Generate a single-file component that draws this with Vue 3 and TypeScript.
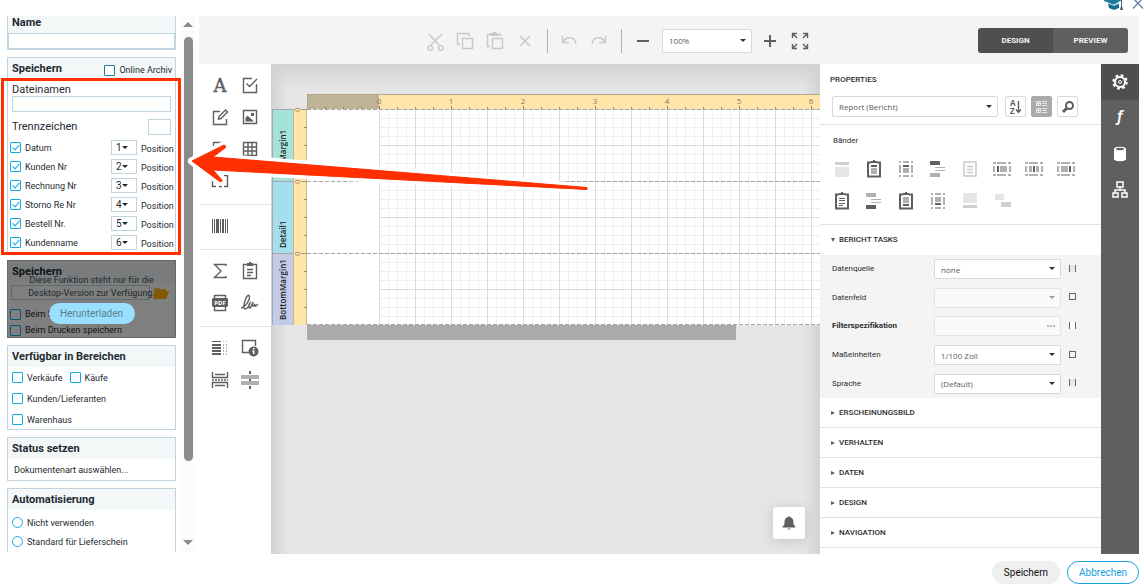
<script setup lang="ts">
import { reactive, ref } from 'vue'

interface Shape {
  d: string
  c: string
}

const icons: Record<string, Shape[]> = {
  check: [{ d: 'M12 3.5H3.5V17.500H16.500V9M6.500 8.500L9.500 11.500L17 4', c: 's' }],
  edit: [{ d: 'M10 4.500H3.500V17.500H16.500V12M9 9.500L15.500 3L17.500 5L11 11.500L8.500 12Z', c: 's' }],
  picture: [
    { d: 'M3.500 3.500H16.500V16.500H3.500Z', c: 's' },
    { d: 'M5.500 14.500V11L7.500 8.500L10 11L11.500 12L14 14.500ZM11 6H14V9H11Z', c: 'f' },
  ],
  rich: [{ d: 'M3.500 7V3.500H15M17 9V12M3.500 12V16.500H7M11 11L14 14', c: 's' }],
  table: [{ d: 'M3.500 3.500H16.500V16.500H3.500ZM3 8H17M3 12H17M8 3V17M12 3V17', c: 's' }],
  subreport: [{ d: 'M6 4.500H2.500V15.500H6M14 4.500H17.500V15.500H14M8 4.500H12M9 15.500H12', c: 's' }],
  barcode: [{ d: 'M2 3H3V17H2ZM4 3H5V17H4ZM6 3H9V17H6ZM10 3H11V17H10ZM12 3H14V17H12ZM15 3H16V17H15ZM17 3H18V17H17Z', c: 'f' }],
  sigma: [{ d: 'M16 5V3.500H4.500L11 10L4.500 16.500H16V15', c: 's' }],
  clipboard: [
    { d: 'M7 3.500H3.500V17.500H16.500V3.500H13M7 8.500H13M7 11.500H13M7 14.500H11', c: 's' },
    { d: 'M7 2H9V1H11V2H13V5H7Z', c: 'f' },
  ],
  pdf: [
    { d: 'M4.500 5V2.500H15.500V5M4.500 14V17.500H15.500V14', c: 's' },
    { d: 'M3 5H17L18 6V13L17 14H3L2 13V6Z', c: 'f' },
  ],
  sign: [{ d: 'M1 15C6 14 11 5 9 2.500C7 1 3 11 4 15C5 18 10 13 10 10C8 13 9 17 11 14L13 9C12 14 13 14 15 11C14 15 16 13 18 11', c: 's' }],
  toc: [
    { d: 'M2 3H11V4H2ZM2 6H11V8H2ZM2 9H11V11H2ZM2 12H11V14H2ZM2 15H11V17H2Z', c: 'f' },
    { d: 'M13 3H14V4H13ZM16 3H17V4H16ZM13 6H14V8H13ZM16 6H17V8H16ZM13 9H14V11H13ZM16 9H17V11H16ZM13 12H14V14H13ZM16 12H17V14H16ZM13 15H14V17H13ZM16 15H17V17H16Z', c: 'm' },
  ],
  info: [
    { d: 'M9 14.500H2.500V2.500H15.500V8', c: 's' },
    { d: 'M13.500 8.500A5 5 0 1 0 13.600 8.500ZM13 10H14.500V11.500H13ZM12 12.500H14.500V16H13V13.500H12Z', c: 'f' },
  ],
  pagebreak: [{ d: 'M2.500 2V7.500H17.500V2M5 4.500H15M2.500 18V12.500H17.500V18M5 15.500H15M2 10H4M5 10H7M8 10H10M11 10H13M14 10H16M17 10H18', c: 's' }],
  crossband: [
    { d: 'M1 5H19V9H1ZM1 11H19V15H1Z', c: 'm' },
    { d: 'M9 1H11V4H9ZM9 16H11V19H9ZM9 9H11V11H9Z', c: 'f' },
  ],
  cut: [{ d: 'M4 3L14 14M17 3L6 14M7 15.500A2.300 2.300 0 1 1 6.900 15.400M17.500 15.500A2.300 2.300 0 1 1 17.400 15.400', c: 'd' }],
  copy: [{ d: 'M5 13.500H2.500V2.500H14V5M7.500 7.500H17.500V17.500H7.500Z', c: 'd' }],
  paste: [
    { d: 'M5 15.500H2.500V3.500H5M13 3.500H15.500V5M7.500 7.500H17.500V17.500H7.500Z', c: 'd' },
    { d: 'M5 2H8V1H11V2H13V5H5Z', c: 'df' },
  ],
  remove: [{ d: 'M5 5L15 15M15 5L5 15', c: 'd' }],
  undo: [{ d: 'M3.500 5V11.500H10M4 11C7 5 16 5 17 13', c: 'd' }],
  redo: [{ d: 'M16.500 5V11.500H10M16 11C13 5 4 5 3 13', c: 'd' }],
  minus: [{ d: 'M4 9H16V11H4Z', c: 'f' }],
  plus: [{ d: 'M4 9H9V4H11V9H16V11H11V16H9V11H4Z', c: 'f' }],
  full: [{ d: 'M2.500 7V2.500H7M3 3L7 7M13 2.500H17.500V7M17 3L13 7M2.500 13V17.500H7M3 17L7 13M13 17.500H17.500V13M17 17L13 13', c: 's' }],
  bandTop: [
    { d: 'M3 3H17V6H3Z', c: 'm2' },
    { d: 'M3 8H17V18H3Z', c: 'l' },
  ],
  bandHead: [
    { d: 'M7 3.500H4V17.500H16V3.500H13', c: 's2' },
    { d: 'M8 2H9V1H11V2H13V4H7V2ZM7 6H13V8H7Z', c: 'f' },
    { d: 'M7 9H13V15H7Z', c: 'm' },
  ],
  bandGroup: [
    { d: 'M3 2H5V4H3ZM7 2H13V4H7ZM15 2H17V4H15ZM3 6H5V14H3ZM15 6H17V14H15ZM7 9H13V14H7ZM3 16H5V18H3ZM7 16H13V18H7ZM15 16H17V18H15Z', c: 'm' },
    { d: 'M7 6H13V8H7Z', c: 'f' },
  ],
  bandStep: [
    { d: 'M2 2H12V6H2Z', c: 'f' },
    { d: 'M7 8H17V9H7ZM7 11H17V12H7ZM2 14H12V18H2Z', c: 'm' },
  ],
  bandPage: [
    { d: 'M4 3H16V17H4ZM7 7.500H13M7 10.500H13M7 13.500H13', c: 'd' },
  ],
  bandV1: [
    { d: 'M1 3H4V5H1ZM5 3H14V5H5ZM16 3H19V5H16ZM1 7H3V13H1ZM8 7H15V13H8ZM17 7H19V13H17ZM1 15H4V17H1ZM5 15H14V17H5ZM16 15H19V17H16Z', c: 'm' },
    { d: 'M5 7H7V13H5Z', c: 'f' },
  ],
  bandV2: [
    { d: 'M1 3H4V5H1ZM5 3H14V5H5ZM16 3H19V5H16ZM1 7H3V13H1ZM5 7H8V13H5ZM12 7H15V13H12ZM17 7H19V13H17ZM1 15H4V17H1ZM5 15H14V17H5ZM16 15H19V17H16Z', c: 'm' },
    { d: 'M9 7H11V13H9Z', c: 'f' },
  ],
  bandV3: [
    { d: 'M1 3H4V5H1ZM5 3H14V5H5ZM16 3H19V5H16ZM1 7H3V13H1ZM5 7H12V13H5ZM17 7H19V13H17ZM1 15H4V17H1ZM5 15H14V17H5ZM16 15H19V17H16Z', c: 'm' },
    { d: 'M13 7H15V13H13Z', c: 'f' },
  ],
  bandDetail: [
    { d: 'M7 3.500H4V17.500H16V3.500H13', c: 's2' },
    { d: 'M8 2H9V1H11V2H13V4H7V2ZM7 7H13V8H7ZM7 9H13V10H7ZM7 12H13V13H7ZM7 14H11V15H7Z', c: 'f' },
  ],
  bandStep2: [
    { d: 'M2 14H12V18H2Z', c: 'f' },
    { d: 'M2 2H12V6H2ZM7 8H17V9H7ZM7 11H17V12H7Z', c: 'm' },
  ],
  bandFoot: [
    { d: 'M7 3.500H4V17.500H16V3.500H13', c: 's2' },
    { d: 'M8 2H9V1H11V2H13V4H7V2ZM7 13H13V15H7Z', c: 'f' },
    { d: 'M7 6H13V12H7Z', c: 'm' },
  ],
  bandGroup2: [
    { d: 'M3 2H5V4H3ZM7 2H13V4H7ZM15 2H17V4H15ZM3 6H5V14H3ZM15 6H17V14H15ZM7 6H13V11H7ZM3 16H5V18H3ZM7 16H13V18H7ZM15 16H17V18H15Z', c: 'm' },
    { d: 'M7 12H13V14H7Z', c: 'f' },
  ],
  bandBottom: [
    { d: 'M3 2H17V12H3Z', c: 'l' },
    { d: 'M3 14H17V17H3Z', c: 'm2' },
  ],
  bandSub: [
    { d: 'M3 3H12V9H3Z', c: 'l' },
    { d: 'M9 11H19V16H9Z', c: 'm2' },
  ],
}

const editGroup: string[] = ['cut', 'copy', 'paste', 'remove']
const undoGroup: string[] = ['undo', 'redo']
const toolGroups: string[][] = [
  ['text', 'check', 'edit', 'picture', 'rich', 'table', 'subreport'],
  ['barcode'],
  ['sigma', 'clipboard', 'pdf', 'sign'],
  ['toc', 'info', 'pagebreak', 'crossband'],
]
const bandIcons: string[] = [
  'bandTop', 'bandHead', 'bandGroup', 'bandStep', 'bandPage', 'bandV1', 'bandV2', 'bandV3',
  'bandDetail', 'bandStep2', 'bandFoot', 'bandGroup2', 'bandBottom', 'bandSub',
]

const fields = reactive([
  { label: 'Datum', on: true, pos: 1 },
  { label: 'Kunden Nr', on: true, pos: 2 },
  { label: 'Rechnung Nr', on: true, pos: 3 },
  { label: 'Storno Re Nr', on: true, pos: 4 },
  { label: 'Bestell Nr.', on: true, pos: 5 },
  { label: 'Kundenname', on: true, pos: 6 },
])

const bands = [
  { name: 'TopMargin1', cls: 'top' },
  { name: 'Detail1', cls: 'detail' },
  { name: 'BottomMargin1', cls: 'bottom' },
]

const tasks = [
  { label: 'Datenquelle', value: 'none', kind: 'select', off: false, marker: 'sides' },
  { label: 'Datenfeld', value: '', kind: 'select', off: true, marker: 'box' },
  { label: 'Filterspezifikation', value: '', kind: 'text', off: true, marker: 'sides white' },
  { label: 'Maßeinheiten', value: '1/100 Zoll', kind: 'select', off: false, marker: 'box' },
  { label: 'Sprache', value: '(Default)', kind: 'select', off: false, marker: 'sides' },
]

const sections = ['ERSCHEINUNGSBILD', 'VERHALTEN', 'DATEN', 'DESIGN', 'NAVIGATION']
const numbers = [1, 2, 3, 4, 5, 6]
const ticks = Array.from({ length: 60 }, (_, i) => i + 1)
const automation = ref('')
</script>

<template>
  <div class="page">
    <header class="strip">
      <svg class="hat" width="20" height="10" viewBox="0 0 20 10">
        <path d="M0 0H18L11 4L9 4.500L0 1Z" fill="#1c7c9b" />
        <path d="M4 3L10 5L15 3V8L10 10L5 8Z" fill="#14708f" />
        <path d="M4 3L10 5.500L15 3.500" fill="none" stroke="#b9dbe6" />
        <path d="M17 0H18V6L19 10H16L17 6Z" fill="#3b5d74" />
      </svg>
      <button class="close" aria-label="Schließen">
        <svg width="12" height="9" viewBox="0 0 12 9"><path d="M1 -2L11 8.500M11 -2L1 8.500" stroke="#7186ad" stroke-width="1.500" /></svg>
      </button>
    </header>

    <div class="main">
      <aside class="side">
        <section class="card name">
          <h2><label for="name">Name</label></h2>
          <input id="name" type="text" />
        </section>

        <section class="card">
          <div class="head">
            <h2>Speichern</h2>
            <label class="opt archive"><input class="tick dark" type="checkbox" />Online Archiv</label>
          </div>
          <div class="files">
            <label class="cap" for="files">Dateinamen</label>
            <input id="files" class="field" type="text" />
            <div class="sep-row">
              <label class="cap" for="sepchar">Trennzeichen</label>
              <input id="sepchar" class="field tiny" type="text" />
            </div>
          </div>
          <div v-for="f in fields" :key="f.label" class="pos-row">
            <label class="opt"><input v-model="f.on" class="tick" type="checkbox" />{{ f.label }}</label>
            <span class="mini">
              <select v-model="f.pos" :aria-label="f.label + ' Position'">
                <option v-for="n in numbers" :key="n" :value="n">{{ n }}</option>
              </select>
            </span>
            <span class="pos">Position</span>
          </div>
        </section>

        <section class="card locked">
          <div class="head"><h2>Speichern</h2></div>
          <div class="locked-body">
            <div class="path-row">
              <input class="field" type="text" aria-label="Ordner" />
              <svg width="16" height="12" viewBox="0 0 16 12"><path d="M1 2L2 1H6L7 2H13V4H16L13 12H0Z" fill="#f2c230" /><path d="M3 4H16L13 12H0Z" fill="#ffb100" /></svg>
            </div>
            <label class="opt"><input class="tick" type="checkbox" />Beim Speichern</label>
            <label class="opt"><input class="tick" type="checkbox" />Beim Drucken speichern</label>
          </div>
          <div class="veil">
            <p>Diese Funktion steht nur für die Desktop-Version zur Verfügung.</p>
            <button>Herunterladen</button>
          </div>
        </section>

        <section class="card">
          <div class="head"><h2>Verfügbar in Bereichen</h2></div>
          <div class="areas">
            <div class="area-row">
              <label class="opt"><input class="tick" type="checkbox" />Verkäufe</label>
              <label class="opt"><input class="tick" type="checkbox" />Käufe</label>
            </div>
            <div class="area-row"><label class="opt"><input class="tick" type="checkbox" />Kunden/Lieferanten</label></div>
            <div class="area-row"><label class="opt"><input class="tick" type="checkbox" />Warenhaus</label></div>
          </div>
        </section>

        <section class="card">
          <div class="head"><h2>Status setzen</h2></div>
          <button class="status">Dokumentenart auswählen...</button>
        </section>

        <section class="card">
          <div class="head"><h2>Automatisierung</h2></div>
          <div class="auto">
            <label class="opt"><input v-model="automation" type="radio" name="auto" value="none" />Nicht verwenden</label>
            <label class="opt"><input v-model="automation" type="radio" name="auto" value="delivery" />Standard für Lieferschein</label>
          </div>
        </section>
      </aside>

      <div class="scroll">
        <i class="up"></i>
        <i class="thumb"></i>
        <i class="down"></i>
      </div>

      <div class="designer">
        <div class="toolbar">
          <button v-for="n in editGroup" :key="n" class="tool" :aria-label="n">
            <svg class="ico" viewBox="0 0 20 20"><path v-for="(s, i) in icons[n]" :key="i" :d="s.d" :class="s.c" /></svg>
          </button>
          <span class="bar"></span>
          <button v-for="n in undoGroup" :key="n" class="tool" :aria-label="n">
            <svg class="ico" viewBox="0 0 20 20"><path v-for="(s, i) in icons[n]" :key="i" :d="s.d" :class="s.c" /></svg>
          </button>
          <span class="bar"></span>
          <button class="tool" aria-label="minus">
            <svg class="ico" viewBox="0 0 20 20"><path v-for="(s, i) in icons.minus" :key="i" :d="s.d" :class="s.c" /></svg>
          </button>
          <span class="drop zoom"><select aria-label="Zoom"><option>100%</option></select></span>
          <button class="tool" aria-label="plus">
            <svg class="ico" viewBox="0 0 20 20"><path v-for="(s, i) in icons.plus" :key="i" :d="s.d" :class="s.c" /></svg>
          </button>
          <button class="tool" aria-label="full">
            <svg class="ico" viewBox="0 0 20 20"><path v-for="(s, i) in icons.full" :key="i" :d="s.d" :class="s.c" /></svg>
          </button>
          <div class="modes">
            <button class="on">DESIGN</button>
            <button>PREVIEW</button>
          </div>
        </div>

        <div class="work">
          <nav class="toolbox">
            <div v-for="(g, gi) in toolGroups" :key="gi" class="group">
              <button v-for="n in g" :key="n" class="cell" :aria-label="n">
                <svg class="ico" viewBox="0 0 20 20">
                  <text v-if="n === 'text'" class="glyph-a" x="10" y="17" text-anchor="middle">A</text>
                  <path v-for="(s, i) in icons[n]" :key="i" :d="s.d" :class="s.c" />
                  <text v-if="n === 'pdf'" class="glyph-pdf" x="10" y="12" text-anchor="middle">PDF</text>
                </svg>
              </button>
            </div>
          </nav>

          <div class="canvas">
            <svg class="ruler" width="100%" height="16">
              <rect x="0" y="0" width="72" height="16" fill="#beb394" />
              <rect x="72" y="0" width="100%" height="16" fill="#ffe5a8" />
              <path d="M0 .5H2000M0 15.500H2000M.5 0V16" stroke="#b3a78c" />
              <path v-for="t in ticks" :key="t" :d="'M' + (t * 18 + 0.5) + (t % 4 === 0 ? ' 12' : ' 13') + 'V16'" stroke="#8f8779" />
              <text x="72" y="10" text-anchor="middle">0</text>
              <text v-for="n in numbers" :key="n" :x="72 + n * 72" y="10" text-anchor="middle">{{ n }}</text>
            </svg>
            <div class="labels">
              <div v-for="b in bands" :key="b.name" class="band" :class="b.cls"><span>{{ b.name }}</span></div>
            </div>
            <svg class="vruler" width="14" height="216">
              <rect width="14" height="216" fill="#ffe5a8" />
              <path d="M.5 0V216M13.500 0V216" stroke="#c9b88f" />
              <path v-for="k in 12" :key="k" :d="'M11 ' + ((k - 1) * 18 + 0.5) + 'H14'" stroke="#8f8779" />
              <path v-for="k in 3" :key="'z' + k" :d="'M8 ' + ((k - 1) * 72 + 0.5) + 'H14'" stroke="#a39a82" />
              <text v-for="k in 3" :key="'t' + k" :transform="'translate(7 ' + ((k - 1) * 72 + 3) + ') rotate(-90)'">0</text>
            </svg>
            <svg class="surface" width="100%" height="216">
              <defs>
                <pattern id="grid" width="36" height="36" patternUnits="userSpaceOnUse">
                  <path d="M9.500 0V36M18.500 0V36M27.500 0V36M0 9.500H36M0 18.500H36M0 27.500H36" stroke="#f0f0f0" />
                  <path d="M.5 0V36M0 .5H36" stroke="#dcdcdc" />
                </pattern>
              </defs>
              <rect width="100%" height="216" fill="#fff" />
              <rect x="72" width="100%" height="216" fill="url(#grid)" />
              <path d="M0 .5H2000M0 72.500H2000M0 144.500H2000M0 215.500H2000" stroke="#a5a5a5" stroke-dasharray="4 2" />
            </svg>
            <div class="track"></div>
            <button class="bell" aria-label="Benachrichtigungen">
              <svg width="14" height="16" viewBox="0 0 14 16"><path d="M7 1L8 2C11 3 11.500 5 11.500 9L13.500 12V12.500H.5V12L2.500 9C2.500 5 3 3 6 2ZM5.500 13.500H8.500L7 15Z" fill="#5f5f5f" /></svg>
            </button>
          </div>

          <aside class="props">
            <h3>PROPERTIES</h3>
            <div class="pick">
              <span class="drop report"><select aria-label="Element"><option>Report (Bericht)</option></select></span>
              <button aria-label="Sortieren">
                <svg class="ico" viewBox="0 0 20 20"><text class="glyph-az" x="4" y="9">A</text><text class="glyph-az" x="4" y="17">Z</text><path d="M12.500 4V15M10 12.500L12.500 15.500L15 12.500" class="s" /></svg>
              </button>
              <button class="on" aria-label="Kategorien">
                <svg class="ico" viewBox="0 0 20 20"><path d="M4.500 4.500H8.500V8.500H4.500ZM4.500 11.500H8.500V15.500H4.500ZM5 6.500H8M6.500 5V8M5 13.500H8M6.500 12V15M10 4.500H15M10 6.500H15M10 8.500H15M10 11.500H15M10 13.500H15M10 15.500H15" fill="none" stroke="#e8e8e8" /></svg>
              </button>
              <button aria-label="Suchen">
                <svg class="ico" viewBox="0 0 20 20"><circle cx="11.500" cy="8.500" r="3.500" class="s2" /><path d="M9 11L5 15" class="s3" /></svg>
              </button>
            </div>
            <div class="band-box">
              <h4>Bänder</h4>
              <div class="band-grid">
                <button v-for="n in bandIcons" :key="n" class="cell" :aria-label="n">
                  <svg class="ico" viewBox="0 0 20 20"><path v-for="(s, i) in icons[n]" :key="i" :d="s.d" :class="s.c" /></svg>
                </button>
              </div>
            </div>
            <button class="fold open"><i></i>BERICHT TASKS</button>
            <div class="tasks">
              <div v-for="(t, i) in tasks" :key="t.label" class="task">
                <label :for="'task' + i" :class="{ strong: t.kind === 'text' }">{{ t.label }}</label>
                <span v-if="t.kind === 'select'" class="drop" :class="{ off: t.off }">
                  <select :id="'task' + i" :disabled="t.off"><option>{{ t.value }}</option></select>
                </span>
                <span v-else class="dots"><input :id="'task' + i" type="text" disabled /><b></b></span>
                <i class="marker" :class="t.marker"></i>
              </div>
            </div>
            <button v-for="s in sections" :key="s" class="fold"><i></i>{{ s }}</button>
          </aside>

          <nav class="rail">
            <button class="on" aria-label="Eigenschaften">
              <svg class="ico" viewBox="0 0 20 20">
                <circle cx="10" cy="10" r="5" fill="none" stroke="#fff" stroke-width="2" />
                <circle cx="10" cy="10" r="1.500" fill="none" stroke="#fff" />
                <circle cx="10" cy="10" r="6.500" fill="none" stroke="#fff" stroke-width="2.500" stroke-dasharray="2.550 2.550" />
              </svg>
            </button>
            <button aria-label="Ausdrücke"><svg class="ico" viewBox="0 0 20 20"><text class="glyph-f" x="10" y="14" text-anchor="middle">ƒ</text></svg></button>
            <button aria-label="Daten">
              <svg class="ico" viewBox="0 0 20 20"><path d="M4 5C4 2 16 2 16 5V15C16 18 4 18 4 15Z" fill="#fff" /><ellipse cx="10" cy="5" rx="4" ry="1.200" fill="#5f5f5f" /></svg>
            </button>
            <button aria-label="Struktur">
              <svg class="ico" viewBox="0 0 20 20"><path d="M7 2H13V7H7ZM10 7V10M5 13V10H15V13M3 13H8V17H3ZM12 13H17V17H12Z" fill="none" stroke="#fff" stroke-width="1.500" /></svg>
            </button>
          </nav>
        </div>
      </div>
      <div class="frame"></div>
    </div>

    <footer class="foot">
      <button>Speichern</button>
      <button class="ghost">Abbrechen</button>
    </footer>

    <svg class="arrow" width="408" height="56" viewBox="0 0 408 56">
      <path class="halo" d="M7 23L39 7Q42 8 40 10L28 19L402 49.500V51.500L28 32L37 42Q37 45 34 43Z" />
      <path class="red" d="M7 23L39 7Q42 8 40 10L28 19L402 49.500V51.500L28 32L37 42Q37 45 34 43Z" />
    </svg>
  </div>
</template>

<style>
body {
  background: #fff;
}
</style>

<style scoped>
* {
  box-sizing: border-box;
}
.page {
  position: relative;
  display: flex;
  flex-direction: column;
  height: 100vh;
  overflow: hidden;
  font: 9px/12px Roboto, "Liberation Sans", sans-serif;
  color: #1e2a30;
}
button, input, select {
  font: inherit;
  color: inherit;
  margin: 0;
}
button {
  border: 0;
  background: none;
  padding: 0;
  display: flex;
  align-items: center;
  justify-content: center;
}
h2, h3, h4, p {
  margin: 0;
}
svg {
  display: block;
  flex: none;
}
.strip {
  height: 16px;
  flex: none;
  display: flex;
  justify-content: flex-end;
  align-items: flex-start;
  gap: 8px;
}
.main {
  position: relative;
  flex: 1;
  min-height: 0;
  display: flex;
  padding-right: 5px;
}
.side {
  width: 169px;
  margin: 0 5px 2px 7px;
  flex: none;
  overflow: hidden;
  display: flex;
  flex-direction: column;
  gap: 7px;
}
.card {
  flex: none;
  border: 1px solid #bfd4de;
  background: #fff;
}
.card h2 {
  font-size: 11px;
  line-height: 14px;
  font-weight: 700;
}
.head {
  display: flex;
  justify-content: space-between;
  align-items: center;
  height: 21px;
  padding: 0 3px 0 4px;
  background: #f3f7f8;
}
.name {
  border-top: 0;
}
.name h2 {
  height: 17px;
  padding-left: 4px;
  line-height: 13px;
  background: #f3f7f8;
}
.name input {
  display: block;
  width: 100%;
  height: 16px;
  border: 1px solid #bfd4de;
  background: #fff;
}
.opt {
  display: flex;
  align-items: center;
  gap: 4px;
}
.archive {
  padding-top: 3px;
}
.tick {
  appearance: none;
  position: relative;
  width: 11px;
  height: 11px;
  border: 1px solid #12abe8;
  border-radius: 1px;
  background: #fff;
  flex: none;
}
.tick.dark {
  border-color: #23799a;
}
.tick:checked::after {
  content: "";
  position: absolute;
  left: 3px;
  top: 0;
  width: 3px;
  height: 6px;
  border: solid #12abe8;
  border-width: 0 1px 1px 0;
  transform: rotate(42deg);
}
.files {
  padding: 4px 4px 0;
}
.cap {
  display: block;
  font-size: 11px;
  line-height: 13px;
}
.field {
  display: block;
  width: 100%;
  height: 16px;
  border: 1px solid #bfd4de;
  background: #fff;
}
.sep-row {
  display: flex;
  align-items: center;
  justify-content: space-between;
  height: 26px;
  padding-top: 3px;
}
.field.tiny {
  width: 23px;
}
.pos-row {
  display: flex;
  align-items: center;
  height: 19px;
  padding-left: 2px;
}
.pos-row .opt {
  flex: 1;
}
.mini {
  position: relative;
  width: 26px;
  height: 15px;
}
.mini select {
  appearance: none;
  display: block;
  width: 100%;
  height: 100%;
  padding: 0 0 0 4px;
  border: 1px solid #bfd4de;
  background: #fff;
  font-size: 10px;
}
.mini::after {
  content: "";
  position: absolute;
  right: 9px;
  top: 6px;
  border: 3px solid transparent;
  border-top-color: #1e2a30;
  border-bottom: 0;
}
.pos {
  width: 34px;
  margin-left: 4px;
  padding-top: 2px;
}
.locked {
  position: relative;
}
.locked-body {
  padding: 3px 2px 0;
  height: 55px;
}
.path-row {
  display: flex;
  align-items: center;
  gap: 3px;
  padding-left: 1px;
  margin-bottom: 6px;
}
.path-row .field {
  width: 139px;
  height: 15px;
}
.locked-body .opt {
  height: 16px;
}
.veil {
  position: absolute;
  inset: -1px;
  display: flex;
  flex-direction: column;
  align-items: center;
  background: rgba(0, 0, 0, 0.5);
  padding: 14px 16px 0;
}
.veil p {
  text-align: center;
  line-height: 13px;
}
.veil button {
  margin-top: 3px;
  width: 86px;
  height: 21px;
  border-radius: 11px;
  background: #99dfff;
  color: #5b7d8f;
  font-size: 10px;
}
.areas {
  height: 62px;
  padding: 0 4px;
}
.area-row {
  display: flex;
  gap: 7px;
  height: 21px;
  align-items: center;
}
.status {
  height: 21px;
  padding-left: 6px;
}
.auto {
  padding: 3px 4px 20px;
}
.auto .opt {
  height: 19px;
}
.auto input {
  appearance: none;
  width: 11px;
  height: 11px;
  border: 1px solid #12abe8;
  border-radius: 50%;
  flex: none;
}
.scroll {
  width: 14px;
  margin: 0 4px 2px 0;
  padding: 6px 0 7px;
  flex: none;
  background: #fbfbfb;
  display: flex;
  flex-direction: column;
  align-items: center;
}
.scroll .up, .scroll .down {
  border: 5px solid transparent;
  border-top: 0;
  border-bottom-color: #8b8b8b;
}
.scroll .down {
  border-top: 5px solid #8b8b8b;
  border-bottom: 0;
  margin-top: auto;
}
.scroll .thumb {
  width: 9px;
  height: 81%;
  margin-top: 10px;
  border-radius: 5px;
  background: #8b8b8b;
}
.designer {
  flex: 1;
  min-width: 0;
  display: flex;
  flex-direction: column;
}
.toolbar {
  height: 48px;
  flex: none;
  display: flex;
  align-items: center;
  background: #f4f4f4;
  padding: 1px 11px 0 221px;
}
.tool {
  width: 30px;
  height: 30px;
  flex: none;
}
.bar {
  width: 1px;
  height: 24px;
  margin: 0 6px 0 7px;
  background: #b0b0b0;
}
.ico {
  width: 20px;
  height: 20px;
}
.s, .s2, .s3 {
  fill: none;
  stroke: #5f5f5f;
  stroke-width: 1.4;
}
.s2 {
  stroke-width: 2;
}
.s3 {
  stroke-width: 3;
}
.f {
  fill: #5f5f5f;
  fill-rule: evenodd;
}
.m {
  fill: #b0b0b0;
}
.m2 {
  fill: #cfcfcf;
}
.l {
  fill: #e5e5e5;
}
.d {
  fill: none;
  stroke: #c9c9c9;
  stroke-width: 1.5;
}
.df {
  fill: #c9c9c9;
}
.glyph-a {
  font: 18px "DejaVu Serif", serif;
  fill: #5f5f5f;
  stroke: #5f5f5f;
  stroke-width: 0.5;
}
.glyph-pdf {
  font: 700 6px "Open Sans", sans-serif;
  fill: #fff;
}
.glyph-az {
  font: 700 8px "Open Sans", sans-serif;
  fill: #5f5f5f;
}
.glyph-f {
  font: italic 500 17px Roboto, sans-serif;
  fill: #fff;
}
.drop {
  position: relative;
  display: block;
}
.drop select {
  appearance: none;
  display: block;
  width: 100%;
  height: 100%;
  padding: 0 16px 0 6px;
  border: 1px solid #d9d9d9;
  border-radius: 2px;
  background: #fff;
  color: #5a5a5a;
  font: 8px "Open Sans", sans-serif;
}
.drop::after {
  content: "";
  position: absolute;
  right: 6px;
  top: 50%;
  margin-top: -2px;
  border: 3px solid transparent;
  border-top-color: #303030;
  border-bottom: 0;
}
.drop.off::after {
  border-top-color: #999;
}
.drop.off select {
  background: #fafafa;
  border-color: #e5e5e5;
  opacity: 1;
}
.zoom {
  width: 90px;
  height: 24px;
  margin: 0 3px 0 4px;
}
.modes {
  margin-left: auto;
  display: flex;
  border-radius: 3px;
  overflow: hidden;
}
.modes button {
  width: 75px;
  height: 25px;
  background: #5f5f5f;
  color: #f4f4f4;
  font-size: 8px;
  font-weight: 700;
}
.modes .on {
  background: #4f4f4f;
}
.work {
  flex: 1;
  min-height: 0;
  display: flex;
}
.toolbox {
  width: 72px;
  flex: none;
  background: #fff;
}
.group {
  display: flex;
  flex-wrap: wrap;
  padding: 5px 6px 7px;
}
.group + .group {
  border-top: 1px solid #e3e3e3;
}
.cell {
  width: 30px;
  height: 32px;
}
.canvas {
  position: relative;
  flex: 1;
  min-width: 0;
  overflow: hidden;
  padding: 30px 0 0 1px;
  display: grid;
  grid-template-columns: 21px 14px 1fr;
  grid-template-rows: 15px 216px 15px;
  align-content: start;
  background:
    linear-gradient(#d2d2d2, rgba(229, 229, 229, 0) 24px),
    linear-gradient(to right, #d2d2d2, rgba(229, 229, 229, 0) 16px),
    linear-gradient(to left, #d2d2d2, rgba(229, 229, 229, 0) 16px),
    #e5e5e5;
}
.ruler {
  grid-column: 3;
}
.vruler {
  overflow: visible;
}
.ruler text, .vruler text {
  font: 8px "Open Sans", sans-serif;
  fill: #7c776b;
}
.labels {
  grid-column: 1;
}
.band {
  height: 72px;
  display: flex;
  align-items: center;
  justify-content: center;
  border: solid #a7a7a7;
  border-width: 1px 0 0 1px;
}
.band span {
  writing-mode: vertical-rl;
  transform: rotate(180deg);
  width: 12px;
  height: 60px;
  font: 600 8px/12px "Open Sans", sans-serif;
  color: #222;
}
.band.top {
  background: #a5e3da;
}
.band.detail {
  background: #a5deef;
}
.band.bottom {
  background: #c2cbe8;
}
.track {
  grid-column: 3;
  width: 429px;
  max-width: 100%;
  background: #aaa;
}
.bell {
  position: absolute;
  right: 15px;
  bottom: 15px;
  width: 32px;
  height: 32px;
  border-radius: 3px;
  background: #fff;
  box-shadow: 0 2px 12px rgba(0, 0, 0, 0.15);
}
.props {
  width: 281px;
  flex: none;
  overflow: hidden;
  background: #fff;
  color: #2c2c2c;
  font-size: 8px;
}
.props h3 {
  margin: 10px 0 0 10px;
  font-size: 8px;
  line-height: 12px;
  font-weight: 500;
}
.pick {
  display: flex;
  gap: 4px;
  padding: 10px 12px 7px;
  border-bottom: 1px solid #e0e0e0;
}
.report {
  width: 166px;
  height: 21px;
  margin-right: 3px;
}
.pick button {
  width: 21px;
  height: 21px;
  border: 1px solid #d9d9d9;
  border-radius: 2px;
  background: #fff;
}
.pick button + button {
  margin-left: 1px;
}
.pick .on {
  background: #aaa;
  border-color: #aaa;
}
.band-box {
  padding: 10px 0 7px 6px;
}
.band-box h4 {
  font-size: 8px;
  font-weight: 400;
  line-height: 12px;
  padding: 0 0 6px 7px;
}
.band-grid {
  display: flex;
  flex-wrap: wrap;
  width: 256px;
}
.band-grid .cell {
  width: 32px;
}
.fold {
  width: 100%;
  height: 30px;
  justify-content: flex-start;
  gap: 4px;
  padding-left: 11px;
  border-bottom: 1px solid #e0e0e0;
  font-weight: 500;
}
.fold i {
  border: 2px solid transparent;
  border-left: 4px solid #5f5f5f;
  border-right: 0;
}
.fold.open {
  height: 31px;
  border-top: 1px solid #e0e0e0;
  border-bottom: 0;
}
.fold.open i {
  border: 2px solid transparent;
  border-top: 4px solid #5f5f5f;
  border-bottom: 0;
}
.tasks {
  background: #f4f4f4;
  height: 143px;
  display: grid;
  grid-template-rows: repeat(5, 1fr);
}
.task {
  display: flex;
  align-items: center;
  padding-left: 12px;
}
.task label {
  width: 102px;
}
.task .strong {
  font-weight: 700;
}
.task .drop, .dots {
  width: 127px;
  height: 20px;
}
.dots {
  position: relative;
}
.dots input {
  display: block;
  width: 100%;
  height: 100%;
  border: 1px solid #e5e5e5;
  border-radius: 2px;
  background: #fafafa;
}
.dots b {
  position: absolute;
  right: 6px;
  top: 9px;
  width: 8px;
  height: 2px;
  background: repeating-linear-gradient(to right, #bbb 0 2px, transparent 2px 3px);
}
.marker {
  width: 7px;
  height: 7px;
  margin: 0 0 2px 8px;
  border: 1px solid #666;
}
.marker.sides {
  border-width: 0 1px;
  background: #e9e9e9;
}
.marker.white {
  background: #fff;
}
.rail {
  width: 38px;
  flex: none;
  background: #5f5f5f;
}
.rail button {
  width: 100%;
  height: 36px;
}
.rail .on {
  background: #4f4f4f;
}
.frame {
  position: absolute;
  left: 1px;
  top: 62px;
  width: 180px;
  height: 177px;
  border: 3px solid #ff2f00;
}
.foot {
  height: 34px;
  flex: none;
  display: flex;
  justify-content: flex-end;
  gap: 7px;
  padding: 7px 5px 0;
}
.foot button {
  height: 23px;
  padding: 0 12px;
  border-radius: 12px;
  background: #efefef;
  color: #111;
  font-size: 10px;
}
.foot .ghost {
  padding: 0 11px;
  border: 1px solid #139edb;
  background: #fff;
  color: #139edb;
}
.arrow {
  position: absolute;
  left: 185px;
  top: 138px;
  pointer-events: none;
}
.halo {
  fill: #fff;
  stroke: #fff;
  stroke-width: 8;
  stroke-linejoin: round;
}
.red {
  fill: #ff2f00;
  stroke: #ff2f00;
  stroke-linejoin: round;
}
</style>
